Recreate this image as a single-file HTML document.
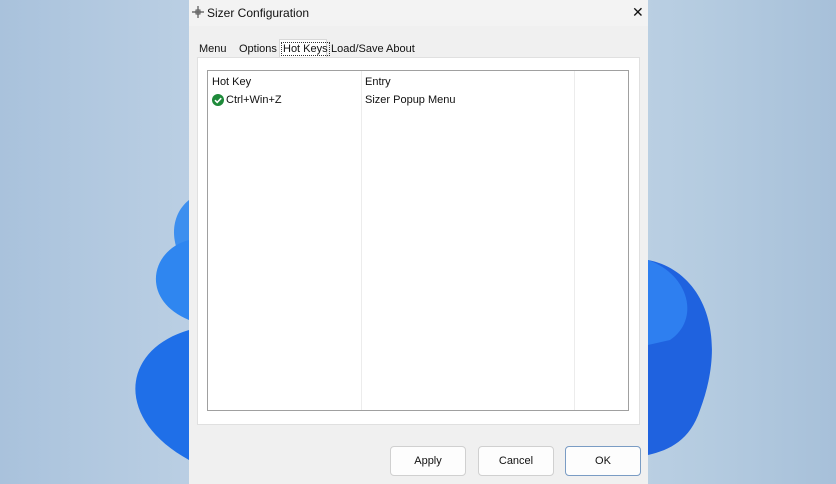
<!DOCTYPE html>
<html><head><style>
body{margin:0;width:836px;height:484px;overflow:hidden;position:relative;background:linear-gradient(90deg,#a9c2dc 0%,#bcd0e4 25%,#c7d8e8 60%,#b4cbe0 85%,#a7c0d9 100%);font-family:"Liberation Sans",sans-serif;font-size:11px;color:#111}
.win{position:absolute;left:189px;top:0;width:459px;height:484px;background:#f0f0f0}
.title{position:absolute;left:0;top:0;width:459px;height:26px;background:#f3f3f3}
.t{position:absolute;white-space:nowrap}
.panel{position:absolute;left:8px;top:57px;width:443px;height:368px;background:#fff;border:1px solid #e0e0e0;box-sizing:border-box}
.lv{position:absolute;left:18px;top:70px;width:422px;height:341px;border:1px solid #a0a0a0;box-sizing:border-box;background:#fff}
.btn{position:absolute;top:446px;width:76px;height:30px;background:#fdfdfd;border:1px solid #d0d0d0;box-sizing:border-box;border-radius:4px;text-align:center;line-height:28px;font-size:11px}
</style></head><body>
<svg style="position:absolute;left:0;top:0" width="836" height="484">
<path d="M189 200 C170 215 168 245 189 270 Z" fill="#3d8fef"/>
<path d="M189 240 C150 250 140 300 189 320 Z" fill="#2f86f0"/>
<path d="M189 330 C120 350 115 420 189 460 Z" fill="#1f6fe8"/>
<path d="M648 260 C700 270 730 330 700 410 C690 440 670 450 648 455 Z" fill="#1f62df"/>
<path d="M648 260 C690 275 700 320 670 340 L648 345 Z" fill="#2e7ff0"/>
</svg>
<div class="win">
<div class="title">
<svg style="position:absolute;left:2px;top:5px" width="14" height="14"><path d="M7 1v12M1 7h12" stroke="#555" stroke-width="1.2"/><rect x="5" y="5" width="4" height="4" fill="none" stroke="#555"/></svg>
<div class="t" style="left:18px;top:6px;font-size:12px">Sizer Configuration</div>
<div class="t" style="left:443px;top:4px;font-size:14px">✕</div>
</div>
<div class="t" style="left:10px;top:43px">Menu</div>
<div class="t" style="left:50px;top:43px">Options</div>
<div style="position:absolute;left:90px;top:39px;width:48px;height:19px;background:#fff;border:1px solid #d8d8d8;border-bottom:none;box-sizing:border-box"></div>
<div class="t" style="left:92px;top:42px;border:1px dotted #333;padding:0 1px">Hot Keys</div>
<div class="t" style="left:142px;top:43px">Load/Save</div>
<div class="t" style="left:197px;top:43px">About</div>
<div class="panel"></div>
<div class="lv">
<div style="position:absolute;left:153px;top:0;width:1px;height:339px;background:#ececec"></div>
<div style="position:absolute;left:366px;top:0;width:1px;height:339px;background:#ececec"></div>
<div class="t" style="left:4px;top:5px">Hot Key</div>
<div class="t" style="left:157px;top:5px">Entry</div>
<svg style="position:absolute;left:4px;top:23px" width="12" height="12"><circle cx="6" cy="6" r="6" fill="#1e8a3a"/><path d="M3 6.2l2.2 2.2 4-4.2" stroke="#fff" stroke-width="1.6" fill="none"/></svg>
<div class="t" style="left:18px;top:23px">Ctrl+Win+Z</div>
<div class="t" style="left:157px;top:23px">Sizer Popup Menu</div>
</div>
<div class="btn" style="left:201px">Apply</div>
<div class="btn" style="left:289px">Cancel</div>
<div class="btn" style="left:376px;border:1px solid #7a9cc4">OK</div>
</div>
</body></html>
